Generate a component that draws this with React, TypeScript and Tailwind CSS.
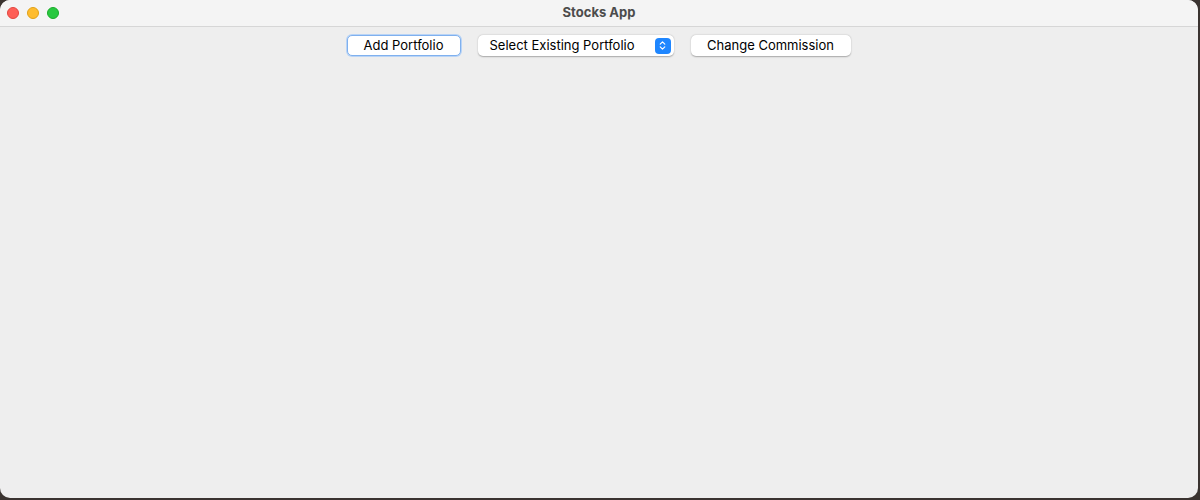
import { ChevronsUpDown } from 'lucide-react';

const Lights = () => (
  <div className="absolute left-[7px] top-[7px] flex gap-2">
    <span className="h-3 w-3 rounded-full bg-[#fe5f57] border border-[#e2463f]" />
    <span className="h-3 w-3 rounded-full bg-[#febc2e] border border-[#e1a116]" />
    <span className="h-3 w-3 rounded-full bg-[#28c840] border border-[#1aab29]" />
  </div>
);

export default function App() {
  return (
    <div className="h-[500px] w-[1200px] bg-[#3a3330] font-['Inter',sans-serif]">
      <div className="flex h-[498px] w-[1198px] flex-col overflow-hidden rounded-[10px] bg-[#eeeeee]">
        <div className="relative flex h-[27px] shrink-0 items-center justify-center border-b border-[#d6d6d6] bg-[#f4f4f4]">
          <Lights />
          <span className="text-[13px] font-bold text-[#4c4c4c]">Stocks App</span>
        </div>
        <div className="flex justify-center gap-[17px] pt-[8px] pr-[1px] text-[13px] text-black">
          <button className="h-[21px] w-[114px] rounded-[5px] border border-[#7fb0ee] bg-white shadow-[0_0_0_1px_#b9d4f6]">
            Add Portfolio
          </button>
          <div className="flex h-[21px] w-[196px] items-center justify-between rounded-[5px] bg-white pl-[12px] pr-[3px] shadow-[0_0.5px_1.5px_rgba(0,0,0,0.3)]">
            <span>Select Existing Portfolio</span>
            <span className="flex h-[16px] w-[16px] items-center justify-center rounded-[4px] bg-[#1e86ff] text-white">
              <ChevronsUpDown size={11} strokeWidth={2.5} />
            </span>
          </div>
          <button className="h-[21px] w-[160px] rounded-[5px] bg-white shadow-[0_0.5px_1.5px_rgba(0,0,0,0.3)]">
            Change Commission
          </button>
        </div>
      </div>
    </div>
  );
}
